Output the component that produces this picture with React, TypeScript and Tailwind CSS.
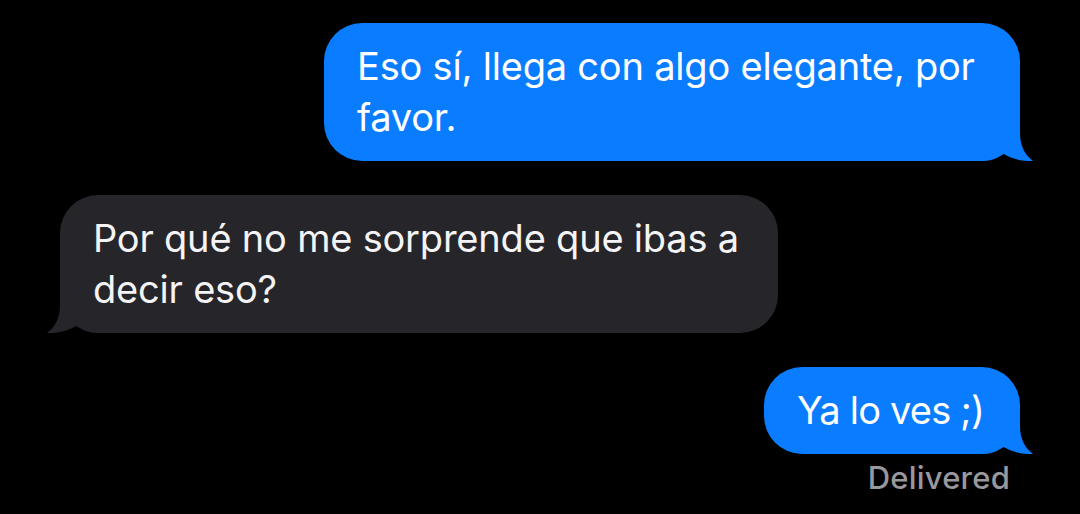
import React from "react"

function Tail({ color, side }: { color: string; side: "left" | "right" }) {
  return (
    <svg
      width="52"
      height="42"
      viewBox="0 0 52 42"
      className={
        side === "right"
          ? "absolute -right-[14px] bottom-0"
          : "absolute -left-[14px] bottom-0 -scale-x-100"
      }
    >
      <path
        d="M0 0 H38 V14 C38 27 43 36 51 42 C40 42.5 30 40 21 34.5 C16 39 9 42 0 42 Z"
        fill={color}
      />
    </svg>
  )
}

function Bubble({
  children,
  mine,
  width,
  tracking = "tracking-[-0.2px]",
}: {
  children: React.ReactNode
  mine?: boolean
  width: string
  tracking?: string
}) {
  const color = mine ? "#0a7cff" : "#262529"
  return (
    <div
      className={`relative whitespace-nowrap rounded-[38px] px-[33px] py-[18px] text-[38px] leading-[51px] ${tracking} ${width} ${
        mine ? "self-end bg-[#0a7cff] text-white" : "self-start bg-[#262529] text-[#f4f4f6]"
      }`}
    >
      <Tail color={color} side={mine ? "right" : "left"} />
      <span className="relative">{children}</span>
    </div>
  )
}

export default function App() {
  return (
    <div
      className="min-h-[514px] w-full bg-black px-[60px] pt-[23px]"
      style={{ fontFamily: "Inter, 'Noto Sans', sans-serif" }}
    >
      <div className="flex flex-col gap-[34px]">
        <Bubble mine width="w-[696px]">
          Eso sí, llega con algo elegante, por
          <br />
          favor.
        </Bubble>
        <Bubble width="w-[718px]">
          Por qué no me sorprende que ibas a
          <br />
          decir eso?
        </Bubble>
        <Bubble mine width="w-[256px]" tracking="tracking-[-0.8px]">
          Ya lo ves ;)
        </Bubble>
      </div>
      <div className="mt-[1px] pr-[10px] text-right text-[31px] font-medium tracking-[0.2px] text-[#98989d]">
        Delivered
      </div>
    </div>
  )
}
